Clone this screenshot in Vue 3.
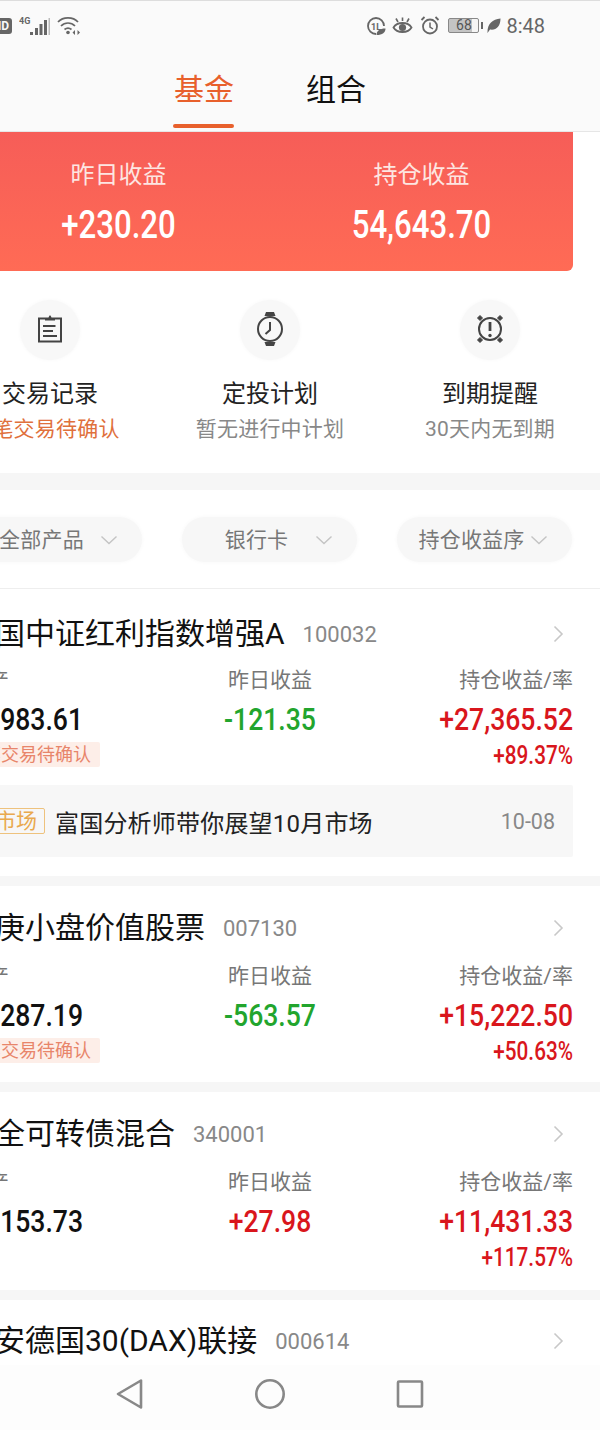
<template>
  <div class="page">
    <div class="screen">
      <header class="top">
        <div class="status">
          <div class="status-left">
            <span class="hd">HD</span>
            <svg class="signal" width="32" height="20" viewBox="0 0 32 20">
              <text x="0" y="8" class="tiny">4G</text>
              <rect x="11" y="16" width="3" height="3" fill="#666" />
              <rect x="16" y="12" width="3" height="7" fill="#666" />
              <rect x="20.500" y="8" width="3" height="11" fill="#666" />
              <rect x="25" y="4" width="3" height="15" fill="#666" />
              <rect x="29.500" y="2" width="1.500" height="17" fill="#bbb" />
            </svg>
            <svg class="wifi" width="24" height="19" viewBox="0 0 24 19" fill="none" stroke="#666" stroke-width="1.700">
              <path d="M1 6C6 .5 16 .5 21 6" />
              <path d="M4 10C8 6 14 6 18 10" />
              <path d="M7.500 13.500C9.500 12 12.500 12 14.500 13.500" />
              <circle cx="11" cy="16.500" r="1.800" fill="#666" stroke="none" />
              <path d="M18 14l-2.500 2.500 2.500 2.500zM20.500 14l2.500 2.500-2.500 2.500z" fill="#666" stroke="none" />
            </svg>
          </div>
          <div class="status-right">
            <svg width="20" height="18" viewBox="0 0 20 18" fill="none" stroke="#666" stroke-width="1.800">
              <path d="M10 17a8 8 0 1 1 8-8" />
              <text x="5" y="12.500" class="tiny-one">1L</text>
              <path d="M10.500 18c0-4 3-6.500 9-6.500 0 4-3 6.500-9 6.500z" fill="#666" stroke="none" />
            </svg>
            <svg width="21" height="18" viewBox="0 0 21 18" fill="none" stroke="#666" stroke-width="1.800">
              <path d="M1.500 10.500C5 4.500 16 4.500 19.500 10.500 16 16.500 5 16.500 1.500 10.500z" />
              <circle cx="10.500" cy="10.500" r="3.600" fill="#666" stroke="none" />
              <path d="M4 1.500l2 3.500M17 1.500l-2 3.500M10.500 .5v3.500" stroke-width="1.600" />
            </svg>
            <svg class="alarm" width="20" height="19" viewBox="0 0 20 19" fill="none" stroke="#666" stroke-width="1.800">
              <circle cx="10" cy="10.500" r="7" />
              <path d="M10 6.500v4.500l3 2" stroke-width="1.500" />
              <path d="M1.500 4l3-3M18.500 4l-3-3" />
            </svg>
            <span class="battery"><span class="battery-num">68</span></span>
            <span class="nub"></span>
            <svg class="leaf" width="14" height="15" viewBox="0 0 14 15">
              <path d="M.5 14C.5 6 5.500 1 13.500 .5c0 8-4.500 12-10.500 11L.5 15z" fill="#666" />
            </svg>
            <span class="time">8:48</span>
          </div>
        </div>
        <nav class="tabs">
          <span class="tab active">基金</span>
          <span class="tab">组合</span>
        </nav>
      </header>

      <section class="content">
        <div class="hero">
          <div class="hero-col">
            <div class="hero-label">昨日收益</div>
            <div class="hero-value">+230.20</div>
          </div>
          <div class="hero-col">
            <div class="hero-label">持仓收益</div>
            <div class="hero-value">54,643.70</div>
          </div>
        </div>

        <div class="shortcuts">
          <div class="shortcut">
            <div class="icon-circle">
              <svg width="26" height="30" viewBox="0 0 26 30" fill="none" stroke="#444" stroke-width="2">
                <path d="M8 3.500H2v23h22v-23h-6" />
                <path d="M8 2.500h3.500L12.500 .5h1l1 2H18v3H8z" fill="#444" stroke="none" />
                <path d="M6 11h12.500M6 16h10M6 21h14" stroke-width="1.800" />
              </svg>
            </div>
            <div class="shortcut-title">交易记录</div>
            <div class="shortcut-sub orange">1笔交易待确认</div>
          </div>
          <div class="shortcut">
            <div class="icon-circle">
              <svg width="30" height="36" viewBox="0 0 30 36" fill="none" stroke="#444" stroke-width="2">
                <circle cx="15" cy="17" r="12" />
                <path d="M9.500 4l1.500-4h8l1.500 4zM9.500 30l1.500 4h8l1.500-4z" fill="#444" stroke="none" />
                <path d="M15 10v8l-4.500 4" />
              </svg>
            </div>
            <div class="shortcut-title">定投计划</div>
            <div class="shortcut-sub">暂无进行中计划</div>
          </div>
          <div class="shortcut">
            <div class="icon-circle">
              <svg width="30" height="30" viewBox="0 0 30 30" fill="none" stroke="#444" stroke-width="2">
                <circle cx="15" cy="14" r="11" />
                <path d="M15 7v9" stroke-width="2.800" />
                <circle cx="15" cy="20.500" r="1.700" fill="#444" stroke="none" />
                <path d="M5 .5L7.500 3 5 5.500 2.500 3zM25 .5L27.500 3 25 5.500 22.500 3zM5 22.500L7.500 25 5 27.500 2.500 25zM25 22.500l2.500 2.500-2.500 2.500-2.500-2.500z" fill="#444" stroke="#444" stroke-width="1" />
              </svg>
            </div>
            <div class="shortcut-title">到期提醒</div>
            <div class="shortcut-sub">30天内无到期</div>
          </div>
        </div>
      </section>

      <div class="band first-band"></div>

      <section class="filters">
        <div v-for="f in filters" :key="f" class="pill">
          <span class="pill-text">{{ f }}</span>
          <svg width="18" height="10" viewBox="0 0 18 10" fill="none" stroke="#c4c4c4" stroke-width="1.400">
            <path d="M1.500 1.500L9 8.500l7.500-7" />
          </svg>
        </div>
      </section>

      <template v-for="(fund, i) in funds" :key="fund.code">
        <div v-if="i > 0" class="band"></div>
        <article
          class="fund"
          :class="{ first: i === 0, settled: fund.amount && !fund.pending, last: i === funds.length - 1 }"
        >
          <div class="fund-head">
            <span class="fund-name">{{ fund.name }}</span>
            <span class="fund-code">{{ fund.code }}</span>
            <svg class="arrow" width="11" height="18" viewBox="0 0 11 18" fill="none" stroke="#c8c8c8" stroke-width="1.600">
              <path d="M1.500 1.500L9 9l-7.500 7.500" />
            </svg>
          </div>
          <div v-if="fund.amount" class="stats">
            <div class="col">
              <div class="label">资产</div>
              <div class="num black">{{ fund.amount }}</div>
              <div v-if="fund.pending" class="pending">1笔交易待确认</div>
            </div>
            <div class="col center">
              <div class="label">昨日收益</div>
              <div class="num" :class="fund.yesterday[0] === '-' ? 'green' : 'red'">{{ fund.yesterday }}</div>
            </div>
            <div class="col right">
              <div class="label">持仓收益/率</div>
              <div class="num red">{{ fund.profit }}</div>
              <div class="rate">{{ fund.rate }}</div>
            </div>
          </div>
          <div v-if="fund.news" class="news">
            <span class="news-tag">市场</span>
            <span class="news-text">{{ fund.news }}</span>
            <span class="news-date">10-08</span>
          </div>
        </article>
      </template>
    </div>

    <footer class="nav">
      <svg width="30" height="32" viewBox="0 0 30 32" fill="none" stroke="#888" stroke-width="2.600" stroke-linejoin="round">
        <path d="M26 2.500v27L3 16z" />
      </svg>
      <svg width="30" height="32" viewBox="0 0 30 32" fill="none" stroke="#888" stroke-width="2.600">
        <circle cx="15" cy="16" r="13.700" />
      </svg>
      <svg width="30" height="32" viewBox="0 0 30 32" fill="none" stroke="#888" stroke-width="2.600" stroke-linejoin="round">
        <rect x="3" y="3.500" width="24" height="25" rx="1" />
      </svg>
    </footer>
  </div>
</template>

<script setup>
const filters = ["全部产品", "银行卡", "持仓收益序"];

const funds = [
  {
    name: "富国中证红利指数增强A",
    code: "100032",
    amount: "57,983.61",
    yesterday: "-121.35",
    profit: "+27,365.52",
    rate: "+89.37%",
    pending: true,
    news: "富国分析师带你展望10月市场",
  },
  {
    name: "中庚小盘价值股票",
    code: "007130",
    amount: "45,287.19",
    yesterday: "-563.57",
    profit: "+15,222.50",
    rate: "+50.63%",
    pending: true,
  },
  {
    name: "兴全可转债混合",
    code: "340001",
    amount: "21,153.73",
    yesterday: "+27.98",
    profit: "+11,431.33",
    rate: "+117.57%",
  },
  {
    name: "华安德国30(DAX)联接",
    code: "000614",
  },
];
</script>

<style>
html,
body {
  margin: 0;
  background: #fff;
}
</style>

<style scoped>
.page {
  position: relative;
  width: 600px;
  height: 1430px;
  overflow: hidden;
  background: #fff;
  font-family: Roboto, "Noto Sans CJK SC", sans-serif;
}

.screen {
  width: 660px;
  margin-left: -60px;
}

.top {
  height: 132px;
  box-sizing: border-box;
  background: #fafafa;
  border-top: 1px solid #ddd;
  border-bottom: 1px solid #e6e6e6;
}

.status {
  height: 47px;
  padding: 2px 55px 0 50px;
  box-sizing: border-box;
  display: flex;
  justify-content: space-between;
  align-items: center;
}

.status-left,
.status-right {
  display: flex;
  align-items: center;
}

.signal {
  margin-left: 7px;
}

.wifi {
  margin-left: 6px;
}

.status-right {
  gap: 6px;
}

.hd {
  width: 22px;
  height: 16px;
  border-radius: 3px;
  background: #666;
  color: #fafafa;
  font-size: 12px;
  font-weight: 700;
  line-height: 16px;
  text-align: center;
}

.tiny {
  font-size: 9px;
  font-weight: 700;
  fill: #666;
}

.tiny-one {
  font-size: 9px;
  font-weight: 700;
  fill: #666;
  stroke: none;
}

.alarm {
  margin-left: 1px;
}

.battery {
  width: 31px;
  height: 15px;
  margin-left: 2px;
  border: 1px solid #888;
  border-radius: 2px;
  background: linear-gradient(90deg, #c4c4c4 78%, #f5f5f5 78%);
  box-sizing: border-box;
  text-align: center;
}

.battery-num {
  display: block;
  color: #555;
  font-size: 14px;
  line-height: 13px;
}

.nub {
  width: 2px;
  height: 7px;
  margin-left: -4px;
  background: #666;
}

.leaf {
  margin-left: -2px;
}

.time {
  margin-left: -1px;
  color: #666;
  font-size: 20px;
}

.tabs {
  display: flex;
  justify-content: center;
  gap: 72px;
  height: 83px;
}

.tab {
  position: relative;
  height: 83px;
  padding-top: 21px;
  box-sizing: border-box;
  color: #111;
  font-size: 30px;
  line-height: 42px;
}

.tab.active {
  color: #e8602c;
}

.tab.active::after {
  content: "";
  position: absolute;
  left: -1px;
  right: 0;
  bottom: 3px;
  height: 4px;
  border-radius: 2px;
  background: #e8602c;
}

.content {
  padding: 0 27px;
}

.hero {
  height: 139px;
  display: grid;
  grid-template-columns: 1fr 1fr;
  border-radius: 0 0 6px 6px;
  background: linear-gradient(180deg, #f65d58, #ff6b55);
  color: #fff;
  text-align: center;
}

.hero-col {
  padding-top: 26px;
}

.hero-label {
  font-size: 24px;
  line-height: 34px;
  color: #fde6e2;
}

.hero-value {
  margin-top: 8px;
  font-size: 38px;
  font-weight: 500;
  line-height: 50px;
  transform: scaleX(0.82);
}

.shortcuts {
  display: grid;
  grid-template-columns: repeat(3, 220px);
  margin: 0 -27px;
  height: 202px;
  text-align: center;
}

.icon-circle {
  width: 60px;
  height: 60px;
  margin: 29px auto 0;
  display: flex;
  align-items: center;
  justify-content: center;
  border-radius: 50%;
  background: #f8f8f8;
  box-shadow: 0 0 4px #f8f8f8;
}

.shortcut-title {
  margin-top: 17px;
  color: #222;
  font-size: 24px;
  line-height: 34px;
}

.shortcut-sub {
  margin-top: 3px;
  color: #888;
  font-size: 21px;
  letter-spacing: 0.2px;
  line-height: 30px;
}

.shortcut-sub.orange {
  color: #e0703c;
}

.band {
  height: 10px;
  background: #f6f6f6;
}

.first-band {
  height: 17px;
}

.filters {
  height: 99px;
  box-sizing: border-box;
  margin-left: 27px;
  padding: 27px 28px 0 0;
  display: flex;
  justify-content: space-between;
  border-bottom: 1px solid #eee;
}

.pill {
  width: 175px;
  height: 45px;
  box-sizing: border-box;
  padding: 0 22px 0 16px;
  display: grid;
  grid-template-columns: 1fr 20px;
  align-items: center;
  border-radius: 23px;
  background: #f7f7f7;
  box-shadow: 0 0 4px #f7f7f7;
}

.pill-text {
  padding-bottom: 4px;
  color: #777;
  font-size: 21px;
  letter-spacing: 0.2px;
  text-align: center;
  white-space: nowrap;
}

.fund {
  padding: 25px 27px 15px;
}

.fund.first {
  padding-top: 26px;
}

.fund.settled {
  padding-bottom: 17px;
}

.fund.last {
  padding: 24px 27px 0;
}

.fund-head {
  display: flex;
  align-items: center;
  height: 34px;
}

.fund.first .fund-head {
  margin-top: 2px;
}

.fund-name {
  margin-left: -2px;
  color: #111;
  font-size: 30px;
  line-height: 34px;
  white-space: nowrap;
}

.fund-code {
  margin-left: 18px;
  color: #888;
  font-size: 22px;
}

.arrow {
  margin-left: auto;
  margin-right: 9px;
}

.stats {
  display: grid;
  grid-template-columns: 1fr 1fr 1fr;
  margin-top: 16px;
}

.fund.first .stats {
  margin-top: 14px;
}

.col.center {
  text-align: center;
}

.col.right {
  text-align: right;
}

.label {
  color: #777;
  font-size: 21px;
  line-height: 30px;
}

.num {
  margin-top: 4px;
  font-size: 32px;
  font-weight: 500;
  line-height: 40px;
  transform: scaleX(0.83);
  transform-origin: left center;
}

.num.black {
  margin-left: -3px;
  color: #111;
}

.center .num {
  transform-origin: center;
}

.right .num {
  transform-origin: right center;
}

.red {
  color: #d9161c;
}

.green {
  color: #22a52d;
}

.rate {
  margin-top: 2px;
  color: #d9161c;
  font-size: 25px;
  font-weight: 500;
  line-height: 30px;
  transform: scaleX(0.83);
  transform-origin: right center;
}

.pending {
  display: inline-block;
  margin-top: 3px;
  padding: 0 9px 0 6px;
  border-radius: 2px;
  background: #fdeee8;
  color: #e8856a;
  font-size: 18px;
  line-height: 25px;
  white-space: nowrap;
}

.news {
  height: 72px;
  margin: 14px 0 4px;
  padding: 0 18px 0 20px;
  display: flex;
  align-items: center;
  background: #f7f7f7;
  border-radius: 2px;
}

.news-tag {
  padding: 0 7px;
  border: 1px solid #eec27d;
  border-radius: 2px;
  color: #e9a94e;
  font-size: 21px;
  line-height: 24px;
}

.news-text {
  margin-left: 10px;
  color: #222;
  font-size: 24px;
  letter-spacing: 0.2px;
}

.news-date {
  margin-left: auto;
  color: #888;
  font-size: 21.500px;
}

.nav {
  position: absolute;
  left: 0;
  right: 0;
  bottom: 0;
  height: 65px;
  display: grid;
  grid-template-columns: 30px 30px 30px;
  column-gap: 110px;
  justify-content: center;
  align-items: center;
  padding: 0 60px 8px 0;
  box-sizing: border-box;
  background: #fdfdfd;
}
</style>
